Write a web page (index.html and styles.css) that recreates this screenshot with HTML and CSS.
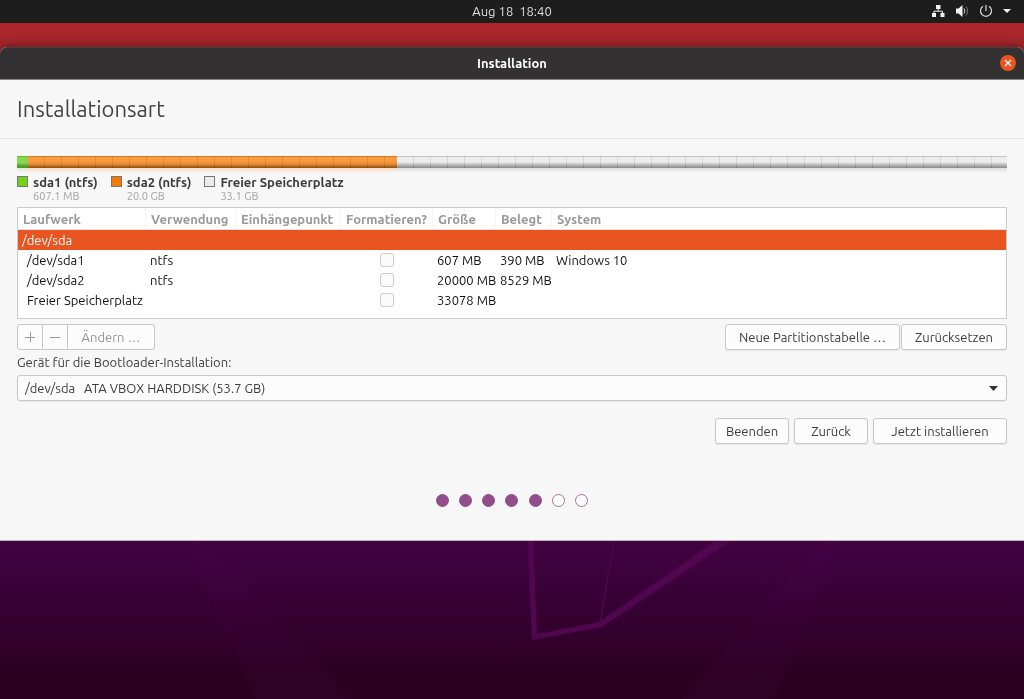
FILE: index.html
```html
<!DOCTYPE html>
<html lang="de">
<head>
<meta charset="utf-8">
<meta name="viewport" content="width=device-width, initial-scale=1">
<title>Installation</title>
<link rel="stylesheet" href="styles.css">
</head>
<body>
<svg class="wallpaper" viewBox="0 0 1024 699" preserveAspectRatio="xMidYMax slice" aria-hidden="true">
  <path d="M186 541L255 699H352L205 541Z" fill="#5c0858" fill-opacity=".09"/>
  <path d="M839 541L775 699H681L820 541Z" fill="#5c0858" fill-opacity=".09"/>
  <path d="M527 530L532 640L602 627L748 530H731L599 622L537 634L533 530Z" fill="#510650"/>
  <path d="M616 530L600 623" fill="none" stroke="#4c064c" stroke-width="1.500"/>
</svg>
<header class="topbar">
  <time class="clock">Aug 18&nbsp; 18:40</time>
  <div class="tray">
    <svg width="14" height="14" viewBox="0 0 14 14" aria-label="Netzwerk"><path d="M5 1h4.500v4H5zM1 9h4v4H1zM9.500 9h4v4h-4z" fill="#f2f2f2"/><path d="M7.200 5v2.200M3 9V7.200h8.500V9" fill="none" stroke="#f2f2f2"/></svg>
    <svg width="14" height="14" viewBox="0 0 14 14" aria-label="Lautstärke"><path d="M1 4.500h2.500L7.500 1v12L3.500 9.500H1z" fill="#f2f2f2"/><path d="M9 4.500q1.800 2.500 0 5" fill="none" stroke="#ddd"/><path d="M11 2.500q3.400 4.500 0 9" fill="none" stroke="#777"/></svg>
    <svg width="14" height="14" viewBox="0 0 14 14" aria-label="Ausschalten"><path d="M4 2.200a5.500 5.500 0 1 0 6 0M7 1v6" fill="none" stroke="#d8d8d8" stroke-width="1.200"/></svg>
    <svg class="tray-arrow" width="8" height="14" viewBox="0 0 8 14" aria-hidden="true"><path d="M0 5h8L4 9z" fill="#f2f2f2"/></svg>
  </div>
</header>
<main class="window">
  <div class="titlebar">
    <span class="window-title">Installation</span>
    <button class="close" type="button" aria-label="Schließen"><svg width="16" height="16" viewBox="0 0 16 16"><path d="M5 5l6 6M11 5l-6 6" stroke="#fff" stroke-width="1.300"/></svg></button>
  </div>
  <h1 class="heading">Installationsart</h1>
  <div class="content">
    <div class="disk">
      <div class="part part-green" style="width:1.1%"></div>
      <div class="part part-orange" style="width:37.3%"></div>
      <div class="part part-free"></div>
    </div>
    <ul class="legend">
      <li class="legend-item"><span class="swatch swatch-green"></span><span class="legend-text"><b>sda1 (ntfs)</b><small>607.1 MB</small></span></li>
      <li class="legend-item"><span class="swatch swatch-orange"></span><span class="legend-text"><b>sda2 (ntfs)</b><small>20.0 GB</small></span></li>
      <li class="legend-item"><span class="swatch"></span><span class="legend-text"><b>Freier Speicherplatz</b><small>33.1 GB</small></span></li>
    </ul>
    <div class="list">
      <table class="partitions">
        <colgroup><col class="c-drive"><col class="c-use"><col class="c-mount"><col class="c-format"><col class="c-size"><col class="c-used"><col></colgroup>
        <thead><tr><th>Laufwerk</th><th>Verwendung</th><th>Einhängepunkt</th><th>Formatieren?</th><th>Größe</th><th>Belegt</th><th>System</th></tr></thead>
        <tbody>
          <tr class="selected"><td>/dev/sda</td><td></td><td></td><td></td><td></td><td></td><td></td></tr>
          <tr><td>/dev/sda1</td><td>ntfs</td><td></td><td class="check"><input type="checkbox" disabled aria-label="/dev/sda1 formatieren"></td><td>607 MB</td><td>390 MB</td><td>Windows 10</td></tr>
          <tr><td>/dev/sda2</td><td>ntfs</td><td></td><td class="check"><input type="checkbox" disabled aria-label="/dev/sda2 formatieren"></td><td>20000 MB</td><td>8529 MB</td><td></td></tr>
          <tr><td>Freier Speicherplatz</td><td></td><td></td><td class="check"><input type="checkbox" disabled aria-label="Freien Speicherplatz formatieren"></td><td>33078 MB</td><td></td><td></td></tr>
        </tbody>
      </table>
    </div>
    <div class="tools">
      <div class="linked">
        <button class="btn btn-icon" type="button" disabled aria-label="Hinzufügen"><svg width="12" height="12" viewBox="0 0 12 12"><path d="M1 6.500h10M6.500 1v10" stroke="#979797"/></svg></button>
        <button class="btn btn-icon" type="button" disabled aria-label="Entfernen"><svg width="12" height="12" viewBox="0 0 12 12"><path d="M1 6.500h10" stroke="#979797"/></svg></button>
        <button class="btn btn-change" type="button" disabled>Ändern …</button>
      </div>
      <div class="tools-right">
        <button class="btn" type="button">Neue Partitionstabelle …</button>
        <button class="btn" type="button">Zurücksetzen</button>
      </div>
    </div>
    <label class="boot-label" for="boot">Gerät für die Bootloader-Installation:</label>
    <div class="combo">
      <select class="combo-select" id="boot"><option>/dev/sda&nbsp;&nbsp; ATA VBOX HARDDISK (53.7 GB)</option></select>
      <svg class="combo-arrow" width="9" height="5" viewBox="0 0 9 5" aria-hidden="true"><path d="M0 0h9L4.500 5z" fill="#333"/></svg>
    </div>
    <div class="actions">
      <button class="btn btn-small" type="button">Beenden</button>
      <button class="btn btn-small" type="button">Zurück</button>
      <button class="btn btn-install" type="button">Jetzt installieren</button>
    </div>
    <div class="dots" role="img" aria-label="Schritt 5 von 7">
      <i class="dot dot-done"></i><i class="dot dot-done"></i><i class="dot dot-done"></i><i class="dot dot-done"></i><i class="dot dot-done"></i><i class="dot"></i><i class="dot"></i>
    </div>
  </div>
</main>
</body>
</html>
```
FILE: styles.css
```css
* { box-sizing: border-box; }
html { min-height: 100%; background: linear-gradient(#ab272b 0, #ab272b 30px, #8b2030 80px, #3f023f 560px, #2a0021 680px); }
body { margin: 0; font: 13px/16px Ubuntu, "Noto Sans", sans-serif; color: #3d3d3d; }
button, select { font: inherit; color: inherit; }
.wallpaper { position: fixed; inset: 0; width: 100%; height: 100%; z-index: -1; }
.topbar { display: grid; grid-template-columns: 1fr auto 1fr; align-items: center; height: 23px; padding: 0 13px 1px; background: #1d1d1d; color: #dedede; }
.clock { grid-column: 2; }
.tray { display: flex; justify-content: flex-end; gap: 10px; }
.window { margin-top: 24px; background: #f7f7f7; border-radius: 7px 7px 0 0; border-bottom: 1px solid #b5b5b5; box-shadow: 0 2px 12px rgba(0, 0, 0, .6); }
.titlebar { display: grid; grid-template-columns: 1fr auto 1fr; align-items: center; height: 33px; padding: 0 8px 1px; background: #333132; border-top: 1px solid #474142; border-bottom: 1px solid #858585; border-radius: 7px 7px 0 0; color: #fff; font-weight: 700; }
.window-title { grid-column: 2; }
.close { justify-self: end; display: flex; width: 16px; height: 16px; padding: 0; border: 0; border-radius: 50%; background: #e95420; }
.heading { margin: 0; padding: 14px 17px 15px; border-bottom: 1px solid #e2e2e2; font-size: 22px; line-height: 29px; font-weight: 400; color: #444; }
.content { padding: 17px 17px 33px; }
.disk { display: flex; height: 18px; }
.part { --edge: rgba(0, 0, 0, .1); background: repeating-linear-gradient(90deg, transparent 0 16px, var(--edge) 16px 17px) 0 0 / 100% 12px no-repeat, var(--fill); }
.part-green { --edge: transparent; --fill: linear-gradient(#62bd35 0 1px, #86d651 1px 7px, #5eac35 9px, #499323 12px, #d9edcf 12px, #f7f7f7 17px); }
.part-orange { --fill: linear-gradient(#d47a25 0 1px, #fa9b40 1px 5px, #e98b34 8px, #bd6b21 10px, #8b4c13 12px, #f5dcc4 12px, #f7f7f7 17px); }
.part-free { flex: 1; --fill: linear-gradient(#c5c5c5 0 1px, #ededed 1px 6px, #c8c8c8 8px, #a8a8a8 10px, #888 12px, #dedede 12px, #f7f7f7 17px); }
.legend { display: flex; gap: 13px; margin: 0; padding: 0 0 5px; list-style: none; }
.legend-item { display: flex; gap: 5px; }
.swatch { width: 11px; height: 11px; margin-top: 2px; border: 1px solid #777; background: #ececec; }
.swatch-green { background: #73d216; }
.swatch-orange { background: #f57900; }
.legend-text b, .legend-text small { display: block; }
.legend-text b { line-height: 16px; }
.legend-text small { font-size: 11px; line-height: 12px; color: #a3a3a3; }
.list { min-height: 112px; border: 1px solid #ccc; background: #fff; }
.partitions { width: 100%; table-layout: fixed; border-collapse: separate; border-spacing: 0; color: #111; }
.c-drive { width: 128px; }
.c-use { width: 90px; }
.c-mount { width: 105px; }
.c-format { width: 92px; }
.c-size { width: 63px; }
.c-used { width: 56px; }
.partitions th { height: 22px; padding: 0 0 0 5px; border-right: 1px solid #f4f4f4; border-bottom: 1px solid #e2e2e2; text-align: left; white-space: nowrap; color: #999; }
.partitions th:last-child { border-right: 0; }
.partitions td { height: 20px; padding: 0 0 0 4px; white-space: nowrap; }
.partitions td:first-child { padding-left: 9px; }
.partitions .selected td { background: #e95420; color: #fff; }
.partitions .selected td:first-child { padding-left: 4px; }
.partitions .check { padding: 0 1px 1px 0; }
.check input { display: block; appearance: none; width: 14px; height: 14px; margin: 0 auto; border: 1px solid #ccc; border-radius: 3px; background: #fafafa; }
.tools { display: flex; justify-content: space-between; margin-top: 5px; }
.tools-right { display: flex; gap: 1px; }
.linked { display: flex; }
.btn { height: 26px; padding: 0 13px; border: 1px solid #c8c8c8; border-radius: 3px; background: #fcfcfc; box-shadow: 0 1px 1px rgba(0, 0, 0, .07); white-space: nowrap; }
.linked .btn { box-shadow: none; border-radius: 0; color: #979797; }
.linked .btn:not(:first-child) { border-left: 0; }
.linked .btn:first-child { border-radius: 3px 0 0 3px; }
.linked .btn:last-child { border-radius: 0 3px 3px 0; }
.linked .btn-icon { display: flex; align-items: center; padding: 0 6px; }
.linked .btn-change { min-width: 87px; }
.boot-label { display: block; margin: 4px 0 5px; }
.combo { position: relative; }
.combo-select { display: block; appearance: none; width: 100%; height: 26px; padding: 0 24px 0 7px; border: 1px solid #c8c8c8; border-radius: 3px; background: #fcfcfc; box-shadow: 0 1px 1px rgba(0, 0, 0, .07); }
.combo-arrow { position: absolute; right: 9px; top: 11px; pointer-events: none; }
.actions { display: flex; justify-content: flex-end; gap: 5px; margin-top: 17px; }
.btn-small { min-width: 74px; padding: 0 8px; }
.btn-install { min-width: 134px; }
.dots { display: flex; justify-content: space-between; width: 153px; margin: 50px auto 0; }
.dot { width: 13px; height: 13px; border: 1px solid #a56f9f; border-radius: 50%; background: #fff; }
.dot-done { background: #924d8b; border-color: #924d8b; }
```
